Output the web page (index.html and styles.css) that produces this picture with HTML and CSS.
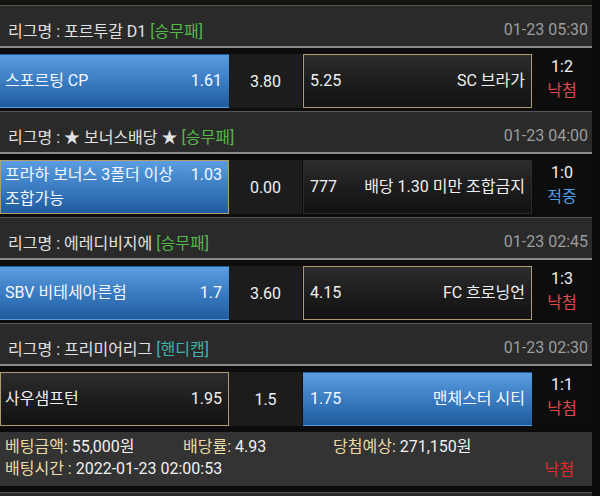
FILE: index.html
```html
<!DOCTYPE html>
<html lang="ko">
<head>
<meta charset="utf-8">
<link rel="stylesheet" href="styles.css">
</head>
<body>
<div class="page">
  <div class="league">
    <div class="league-name">리그명 : 포르투갈 D1 <span class="tag win">[승무패]</span></div>
    <div class="time">01-23 05:30</div>
  </div>
  <div class="row">
    <div class="cell home blue"><div class="inner"><span class="name">스포르팅 CP</span><span class="odd">1.61</span></div></div>
    <div class="cell draw">3.80</div>
    <div class="cell away dark gold"><div class="inner"><span class="odd">5.25</span><span class="name">SC 브라가</span></div></div>
    <div class="cell score"><span>1:2</span><span class="lose">낙첨</span></div>
  </div>

  <div class="league">
    <div class="league-name">리그명 : ★ 보너스배당 ★ <span class="tag win">[승무패]</span></div>
    <div class="time">01-23 04:00</div>
  </div>
  <div class="row">
    <div class="cell home blue gold"><div class="inner top"><span class="name">프라하 보너스 3폴더 이상<br>조합가능</span><span class="odd">1.03</span></div></div>
    <div class="cell draw">0.00</div>
    <div class="cell away dark"><div class="inner"><span class="odd">777</span><span class="name">배당 1.30 미만 조합금지</span></div></div>
    <div class="cell score"><span>1:0</span><span class="hit">적중</span></div>
  </div>

  <div class="league">
    <div class="league-name">리그명 : 에레디비지에 <span class="tag win">[승무패]</span></div>
    <div class="time">01-23 02:45</div>
  </div>
  <div class="row">
    <div class="cell home blue"><div class="inner"><span class="name">SBV 비테세아른험</span><span class="odd">1.7</span></div></div>
    <div class="cell draw">3.60</div>
    <div class="cell away dark gold"><div class="inner"><span class="odd">4.15</span><span class="name">FC 흐로닝언</span></div></div>
    <div class="cell score"><span>1:3</span><span class="lose">낙첨</span></div>
  </div>

  <div class="league">
    <div class="league-name">리그명 : 프리미어리그 <span class="tag handi">[핸디캡]</span></div>
    <div class="time">01-23 02:30</div>
  </div>
  <div class="row">
    <div class="cell home dark gold"><div class="inner"><span class="name">사우샘프턴</span><span class="odd">1.95</span></div></div>
    <div class="cell draw">1.5</div>
    <div class="cell away blue"><div class="inner"><span class="odd">1.75</span><span class="name">맨체스터 시티</span></div></div>
    <div class="cell score"><span>1:1</span><span class="lose">낙첨</span></div>
  </div>

  <div class="summary">
    <div class="sum-line">
      <span class="sum-item c1"><span class="label">베팅금액:</span> 55,000원</span>
      <span class="sum-item c2"><span class="label">배당률:</span> 4.93</span>
      <span class="sum-item c3"><span class="label">당첨예상:</span> 271,150원</span>
    </div>
    <div class="sum-line">
      <span class="sum-item"><span class="label">배팅시간 :</span> 2022-01-23 02:00:53</span>
      <span class="result">낙첨</span>
    </div>
  </div>

  <div class="league last"></div>
</div>
</body>
</html>
```

FILE: styles.css
```css
* { box-sizing: border-box; }
html, body {
  margin: 0;
  padding: 0;
}
body {
  background: #0c0c0c;
  font-family: Roboto, "Noto Sans CJK KR", sans-serif;
  font-size: 16px;
  color: #f0f0f0;
  width: 600px;
  height: 496px;
  overflow: hidden;
}
.page {
  width: 592px;
  padding-top: 5px;
  background: linear-gradient(to bottom, #1a1712 0px, #0c0c0c 6px);
}
.league {
  height: 43px;
  border-top: 1px solid #575757;
  border-bottom: 2px solid #8a8a8a;
  background: #2a2a2a;
  display: flex;
  justify-content: space-between;
  align-items: center;
  padding: 7px 4px 0 8px;
}
.league.last { height: 20px; border-bottom: none; }
.league-name { color: #e2e2e2; }
.tag.win { color: #56b84a; }
.tag.handi { color: #3cb3ad; }
.time { color: #9c9c9c; }
.row {
  margin: 6px 0 5px;
  height: 52px;
  display: grid;
  grid-template-columns: 229px 74px 229px 60px;
  background: #0d0d0d;
}
.cell {
  display: flex;
  align-items: center;
  border: 1px solid transparent;
}
.cell .inner {
  width: 100%;
  display: flex;
  justify-content: space-between;
  align-items: center;
  line-height: 24px;
}
.cell .inner.top { align-items: flex-start; }
.home .inner { padding: 0 6px 0 4px; }
.away .inner { padding: 0 6px 0 6px; }
.home .name { flex: 1; padding-right: 6px; white-space: nowrap; }
.blue {
  background: linear-gradient(to bottom, #5a9ddf 0%, #3b7cc2 50%, #1f5c9e 100%);
  color: #f5f8ff;
}
.dark {
  background: linear-gradient(to bottom, #2c2c2c 0%, #1c1c1c 55%, #121212 100%);
  border-color: #2a2a2a;
}
.gold { border-color: #b19c6f; }
.draw {
  justify-content: center;
  background: #1c1c1c;
  color: #f0f0f0;
  margin-right: 1px;
}
.score {
  flex-direction: column;
  justify-content: center;
  line-height: 24px;
  padding-bottom: 4px;
  color: #f2f2f2;
}
.lose { color: #e2484c; }
.hit { color: #4d9fe6; }
.summary {
  margin-top: 8px;
  margin-bottom: 6px;
  height: 54px;
  background: #333333;
  padding: 4px 0 0 5px;
  line-height: 22px;
  color: #f0f0f0;
}
.sum-line { display: flex; }
.label { color: #e8dba5; }
.c1 { width: 178px; }
.c2 { width: 150px; }
.result {
  margin-left: auto;
  margin-right: 18px;
  color: #e32a2a;
  position: relative;
  top: 1px;
}
```
